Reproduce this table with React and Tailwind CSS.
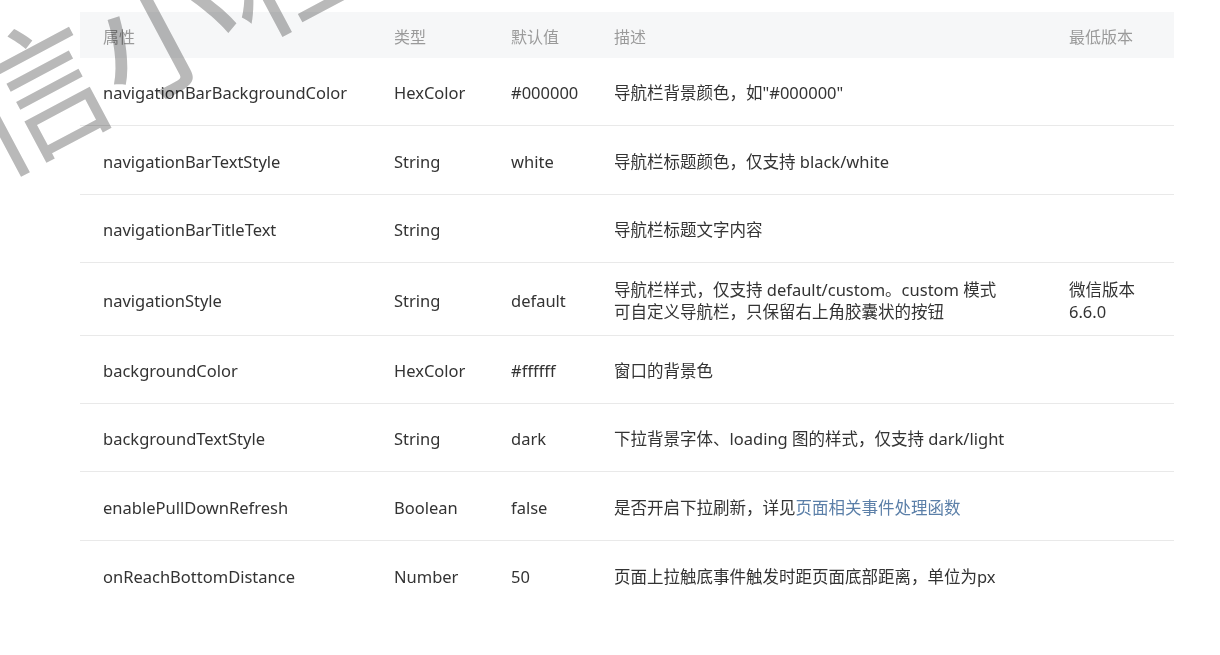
import React from "react";

const rows = [
  { name: "navigationBarBackgroundColor", type: "HexColor", def: "#000000", desc: <>导航栏背景颜色，如"#000000"</>, ver: null, h: "h-[68px]" },
  { name: "navigationBarTextStyle", type: "String", def: "white", desc: <>导航栏标题颜色，仅支持 black/white</>, ver: null, h: "h-[69px]" },
  { name: "navigationBarTitleText", type: "String", def: "", desc: <>导航栏标题文字内容</>, ver: null, h: "h-[68px]" },
  {
    name: "navigationStyle",
    type: "String",
    def: "default",
    desc: (
      <>
        导航栏样式，仅支持 default/custom。custom 模式
        <br />
        可自定义导航栏，只保留右上角胶囊状的按钮
      </>
    ),
    ver: (
      <>
        微信版本
        <br />
        6.6.0
      </>
    ),
    h: "h-[73px]",
  },
  { name: "backgroundColor", type: "HexColor", def: "#ffffff", desc: <>窗口的背景色</>, ver: null, h: "h-[68px]" },
  { name: "backgroundTextStyle", type: "String", def: "dark", desc: <>下拉背景字体、loading 图的样式，仅支持 dark/light</>, ver: null, h: "h-[68px]" },
  {
    name: "enablePullDownRefresh",
    type: "Boolean",
    def: "false",
    desc: (
      <>
        是否开启下拉刷新，详见<span className="text-[#5b7fa8]">页面相关事件处理函数</span>
      </>
    ),
    ver: null,
    h: "h-[69px]",
  },
  { name: "onReachBottomDistance", type: "Number", def: "50", desc: <>页面上拉触底事件触发时距页面底部距离，单位为px</>, ver: null, h: "h-[68px]", last: true },
];

const grid = "grid grid-cols-[291px_117px_103px_455px_1fr] items-center";

export default function App() {
  return (
    <div
      className="relative w-[1220px] h-[655px] overflow-hidden bg-white"
      style={{ fontFamily: '"Noto Sans", "Noto Sans CJK SC", sans-serif' }}
    >
      <div className="pl-[80px] pt-[12px]">
        <div className="w-[1094px]">
          <div className={`${grid} h-[46px] bg-[#f6f7f8] text-[16px] text-[#9a9a9a]`}>
            <div className="pl-[23px] pt-[3px]">属性</div>
            <div className="pl-[23px] pt-[3px]">类型</div>
            <div className="pl-[23px] pt-[3px]">默认值</div>
            <div className="pl-[23px] pt-[3px]">描述</div>
            <div className="pl-[23px] pt-[3px]">最低版本</div>
          </div>
          {rows.map((r) => (
            <div
              key={r.name}
              className={`${grid} ${r.h} ${r.last ? "" : "border-b border-[#e9e9e9]"} text-[16.5px] text-[#333] leading-[22px]`}
            >
              <div className="pl-[23px] pt-[3px]">{r.name}</div>
              <div className="pl-[23px] pt-[3px]">{r.type}</div>
              <div className="pl-[23px] pt-[3px]">{r.def}</div>
              <div className="pl-[23px] pt-[3px] whitespace-nowrap">{r.desc}</div>
              <div className="pl-[23px] pt-[3px]">{r.ver}</div>
            </div>
          ))}
        </div>
      </div>
      <div
        className="absolute left-[-172px] top-[84px] whitespace-nowrap text-[145px] leading-[145px] text-[#b9b9b9] mix-blend-multiply pointer-events-none select-none"
        style={{ fontFamily: '"Noto Sans CJK SC", sans-serif', transform: "rotate(-28deg)", transformOrigin: "72.5px 72.5px" }}
      >
        微信小程序
      </div>
    </div>
  );
}
